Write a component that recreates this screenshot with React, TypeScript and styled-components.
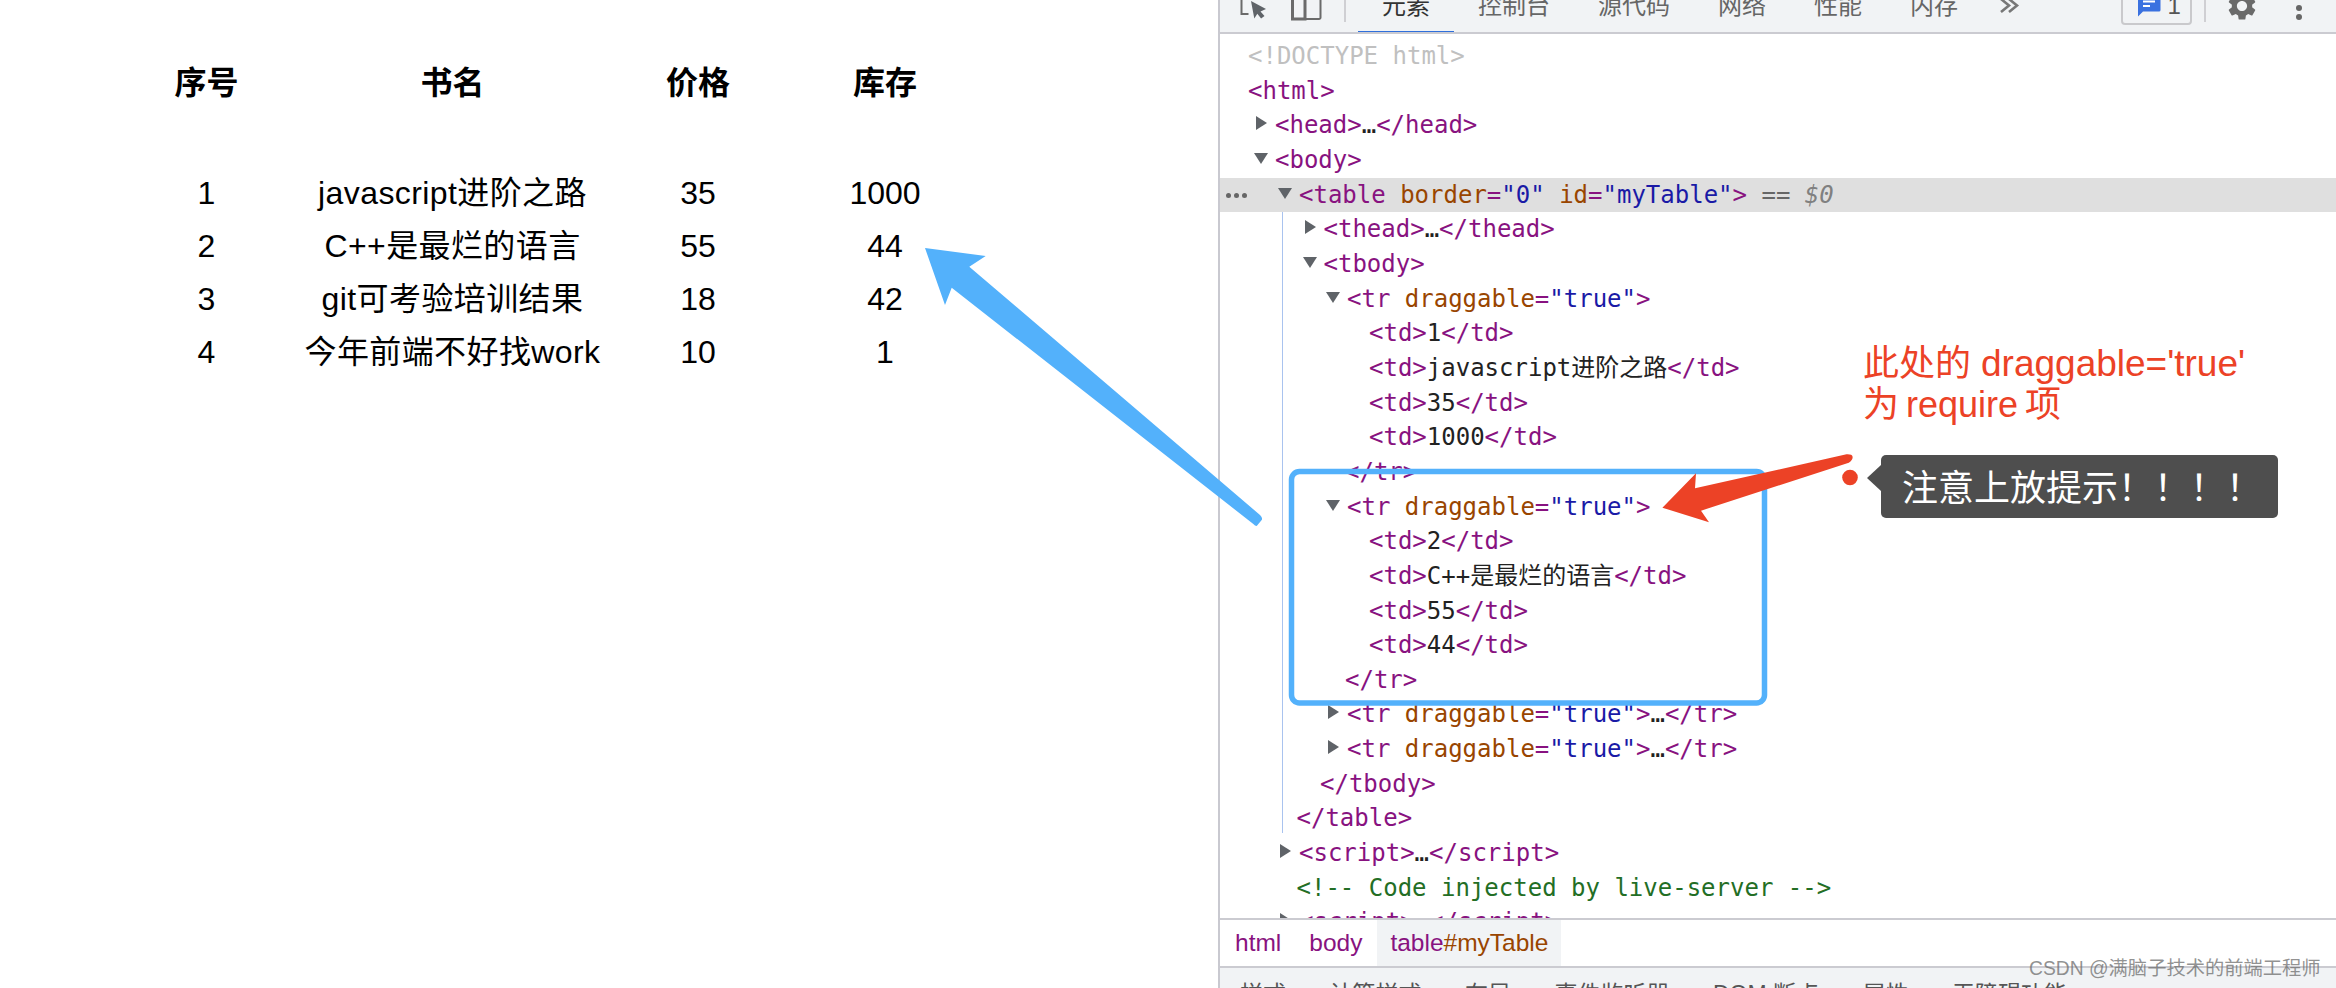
import React from "react";
import styled, { createGlobalStyle } from "styled-components";
import { MdSettings } from "react-icons/md";

const GlobalStyle = createGlobalStyle`
  html, body {
    margin: 0;
    padding: 0;
    background: #fff;
    overflow: hidden;
  }
  * {
    box-sizing: border-box;
  }
`;

const books = [
  { id: "1", name: "javascript进阶之路", price: "35", stock: "1000" },
  { id: "2", name: "C++是最烂的语言", price: "55", stock: "44" },
  { id: "3", name: "git可考验培训结果", price: "18", stock: "42" },
  { id: "4", name: "今年前端不好找work", price: "10", stock: "1" },
];

const TABS = ["元素", "控制台", "源代码", "网络", "性能", "内存"];
const LOWER_TABS = ["样式", "计算样式", "布局", "事件监听器", "DOM 断点", "属性", "无障碍功能"];

const DraggableTr = () => (
  <>
    <Tag>&lt;tr</Tag> <Attr>draggable</Attr>
    <Tag>=</Tag>
    <Val>"true"</Val>
    <Tag>&gt;</Tag>
  </>
);

const CollapsedTr = () => (
  <>
    <DraggableTr />
    <Ellipsis>…</Ellipsis>
    <Tag>&lt;/tr&gt;</Tag>
  </>
);

const Cell = ({ children }: { children: React.ReactNode }) => (
  <>
    <Tag>&lt;td&gt;</Tag>
    {children}
    <Tag>&lt;/td&gt;</Tag>
  </>
);

const App = () => {
  return (
    <Page>
      <GlobalStyle />
      <Preview>
        <TableRow $head>
          <span>序号</span>
          <span>书名</span>
          <span>价格</span>
          <span>库存</span>
        </TableRow>
        {books.map((b) => (
          <TableRow key={b.id}>
            <span>{b.id}</span>
            <BookName>{b.name}</BookName>
            <span>{b.price}</span>
            <span>{b.stock}</span>
          </TableRow>
        ))}
      </Preview>

      <DevTools>
        <Toolbar>
          <InspectIcon width="30" height="24" viewBox="0 0 30 24">
            <path d="M1.5 -4v21h7" fill="none" stroke="#6a6a6a" strokeWidth="2" />
            <path d="M11 4l15 8-5.5 2.6 4 4.4-3.4 2.4-3.8-4.6-3 4.6z" fill="#5f6368" />
          </InspectIcon>
          <DeviceIcon width="32" height="24" viewBox="0 0 32 24">
            <path d="M1.5 -4h12.5v25h-12.5z" fill="none" stroke="#6a6a6a" strokeWidth="3" />
            <path d="M14 -4h15.5v23.5a1.5 1.5 0 0 1-1.5 1.5H14" fill="none" stroke="#6a6a6a" strokeWidth="2" />
          </DeviceIcon>
          <ToolbarDivider $gap={21} />
          {TABS.map((t, i) => (
            <Tab key={t} $active={i === 0}>
              {t}
            </Tab>
          ))}
          <MoreTabs width="20" height="16" viewBox="0 0 20 16">
            <path d="M1 1l8 6.5-8 6.5M9 1l8 6.5-8 6.5" fill="none" stroke="#777" strokeWidth="2.6" />
          </MoreTabs>
          <Spacer />
          <IssueBadge>
            <svg width="24" height="18" viewBox="0 0 24 18">
              <path d="M3 -4h19a1.5 1.5 0 0 1 1.5 1.5V11a1.5 1.5 0 0 1-1.5 1.5H6L1 17.5V-2a1.5 1.5 0 0 1 2-2z" fill="#3a71e0" />
              <path d="M6 2.5h12M6 7h7" stroke="#fff" strokeWidth="2" />
            </svg>
            <span>1</span>
          </IssueBadge>
          <ToolbarDivider $gap={12.5} />
          <GearSlot>
            <MdSettings size={34} color="#6a6a6a" />
          </GearSlot>
          <Kebab>
            <i />
            <i />
          </Kebab>
        </Toolbar>

        <Tree>
          <GuideLine />
          <Row $x={1248} $tone="#c0c0c0">
            &lt;!DOCTYPE html&gt;
          </Row>
          <Row $x={1248}>
            <Tag>&lt;html&gt;</Tag>
          </Row>
          <Row $x={1275} $caret="closed">
            <Tag>&lt;head&gt;</Tag>
            <Ellipsis>…</Ellipsis>
            <Tag>&lt;/head&gt;</Tag>
          </Row>
          <Row $x={1275} $caret="open">
            <Tag>&lt;body&gt;</Tag>
          </Row>
          <Row $x={1299} $caret="open" $selected>
            <RowDots>
              <i />
              <i />
              <i />
            </RowDots>
            <Tag>&lt;table</Tag> <Attr>border</Attr>
            <Tag>=</Tag>
            <Val>"0"</Val> <Attr>id</Attr>
            <Tag>=</Tag>
            <Val>"myTable"</Val>
            <Tag>&gt;</Tag> <Gray>==</Gray> <Ref>$0</Ref>
          </Row>
          <Row $x={1323.5} $caret="closed">
            <Tag>&lt;thead&gt;</Tag>
            <Ellipsis>…</Ellipsis>
            <Tag>&lt;/thead&gt;</Tag>
          </Row>
          <Row $x={1323.5} $caret="open">
            <Tag>&lt;tbody&gt;</Tag>
          </Row>
          <Row $x={1347} $caret="open">
            <DraggableTr />
          </Row>
          <Row $x={1369}>
            <Cell>1</Cell>
          </Row>
          <Row $x={1369}>
            <Cell>javascript进阶之路</Cell>
          </Row>
          <Row $x={1369}>
            <Cell>35</Cell>
          </Row>
          <Row $x={1369}>
            <Cell>1000</Cell>
          </Row>
          <Row $x={1345}>
            <Tag>&lt;/tr&gt;</Tag>
          </Row>
          <Row $x={1347} $caret="open">
            <DraggableTr />
          </Row>
          <Row $x={1369}>
            <Cell>2</Cell>
          </Row>
          <Row $x={1369}>
            <Cell>C++是最烂的语言</Cell>
          </Row>
          <Row $x={1369}>
            <Cell>55</Cell>
          </Row>
          <Row $x={1369}>
            <Cell>44</Cell>
          </Row>
          <Row $x={1345}>
            <Tag>&lt;/tr&gt;</Tag>
          </Row>
          <Row $x={1347} $caret="closed">
            <CollapsedTr />
          </Row>
          <Row $x={1347} $caret="closed">
            <CollapsedTr />
          </Row>
          <Row $x={1320}>
            <Tag>&lt;/tbody&gt;</Tag>
          </Row>
          <Row $x={1296.5}>
            <Tag>&lt;/table&gt;</Tag>
          </Row>
          <Row $x={1299} $caret="closed">
            <Tag>&lt;script&gt;</Tag>
            <Ellipsis>…</Ellipsis>
            <Tag>&lt;/script&gt;</Tag>
          </Row>
          <Row $x={1296.5} $tone="#236e25">
            &lt;!-- Code injected by live-server --&gt;
          </Row>
          <Row $x={1299} $caret="closed">
            <Tag>&lt;script&gt;</Tag>
            <Ellipsis>…</Ellipsis>
            <Tag>&lt;/script&gt;</Tag>
          </Row>
        </Tree>

        <Breadcrumbs>
          <Crumb>
            <Tag>html</Tag>
          </Crumb>
          <Crumb>
            <Tag>body</Tag>
          </Crumb>
          <Crumb $current>
            <Tag>table</Tag>
            <Attr>#myTable</Attr>
          </Crumb>
        </Breadcrumbs>

        <LowerTabs>
          {LOWER_TABS.map((t) => (
            <LowerTab key={t}>{t}</LowerTab>
          ))}
        </LowerTabs>
      </DevTools>

      <Overlay width="2336" height="988" viewBox="0 0 2336 988">
        <path
          d="M925 248L985.7 256 969.3 266.7 1260 515Q1263 518 1261.7 520L1256.7 526Q1255 526 1253.3 524L951.7 287.7 945 305z"
          fill="#53b1fb"
        />
        <rect x="1291.5" y="471.5" width="473" height="231.5" rx="8" fill="none" stroke="#53b1fb" strokeWidth="5.5" />
        <path
          d="M1662.4 507.7L1696 473.3 1695 488.3 1846.5 454.3Q1852 454 1852.6 456.7 1853 460 1848.8 462.7L1701 510.7 1709 522.3z"
          fill="#ec4226"
        />
        <circle cx="1850" cy="477.5" r="7.8" fill="#ec4226" />
      </Overlay>

      <RedNote>
        <NoteLine>
          此处的 <NoteCode>draggable='true'</NoteCode>
        </NoteLine>
        <NoteLine $tight>为 require 项</NoteLine>
      </RedNote>

      <Hint>注意上放提示！！！！</Hint>

      <Watermark>CSDN @满脑子技术的前端工程师</Watermark>
    </Page>
  );
};

export default App;

const SANS = `"Liberation Sans", "Noto Sans CJK SC", sans-serif`;
const MONO = `"DejaVu Sans Mono", "Noto Sans CJK SC", monospace`;

const Page = styled.div`
  position: relative;
  display: flex;
  width: 2336px;
  height: 988px;
  overflow: hidden;
  font-family: ${SANS};
`;

const Preview = styled.div`
  width: 1218px;
  flex-shrink: 0;
  padding: 56px 0 0 151.5px;
`;

const TableRow = styled.div<{ $head?: boolean }>`
  display: grid;
  grid-template-columns: 110px 382px 109px 265px;
  height: 53px;
  margin-bottom: ${(p) => (p.$head ? "57px" : "0")};
  align-items: center;
  text-align: center;
  font-size: 32px;
  line-height: 44px;
  font-weight: ${(p) => (p.$head ? 700 : 400)};
  color: #000;
  white-space: nowrap;
`;

const BookName = styled.span`
  letter-spacing: 0.4px;
`;

const DevTools = styled.div`
  flex: 1;
  display: flex;
  flex-direction: column;
  border-left: 2px solid #c9c9d0;
  min-width: 0;
`;

const Toolbar = styled.div`
  display: flex;
  align-items: flex-end;
  height: 34px;
  flex-shrink: 0;
  background: #f1f3f5;
  border-bottom: 2px solid #cbcbd1;
  overflow: hidden;
`;

const InspectIcon = styled.svg`
  flex-shrink: 0;
  margin: 0 0 11px 20px;
`;

const DeviceIcon = styled.svg`
  flex-shrink: 0;
  margin: 0 0 10px 21px;
`;

const ToolbarDivider = styled.div<{ $gap: number }>`
  flex-shrink: 0;
  width: 2px;
  height: 22px;
  margin: 0 0 10px ${(p) => p.$gap}px;
  background: #cfcfd3;
`;

const Tab = styled.div<{ $active?: boolean }>`
  flex-shrink: 0;
  position: relative;
  top: 2px;
  height: 44px;
  padding: 0 24px;
  margin-left: ${(p) => (p.$active ? "12px" : "0")};
  font-size: 24px;
  line-height: 32px;
  color: ${(p) => (p.$active ? "#333" : "#666")};
  border-bottom: 3px solid ${(p) => (p.$active ? "#2f6fdb" : "transparent")};
`;

const MoreTabs = styled.svg`
  flex-shrink: 0;
  margin: 0 0 18px 18px;
`;

const Spacer = styled.div`
  flex: 1;
`;

const IssueBadge = styled.div`
  flex-shrink: 0;
  display: flex;
  align-items: flex-end;
  gap: 7px;
  width: 71px;
  height: 34px;
  margin-bottom: 7px;
  padding: 0 0 4px 14px;
  border: 2px solid #c9c9cc;
  border-radius: 4px;
  font-size: 24px;
  line-height: 26px;
  color: #555;

  svg {
    flex-shrink: 0;
    margin-bottom: 2px;
  }
`;

const GearSlot = styled.div`
  flex-shrink: 0;
  height: 34px;
  margin: 0 0 9px 19px;

  svg {
    display: block;
  }
`;

const Kebab = styled.div`
  flex-shrink: 0;
  display: flex;
  flex-direction: column;
  gap: 3.5px;
  margin: 0 34px 12px 37px;

  i {
    display: block;
    width: 6px;
    height: 6px;
    border-radius: 50%;
    background: #666;
  }
`;

const Tree = styled.div`
  position: relative;
  height: 886px;
  flex-shrink: 0;
  padding-top: 5px;
  overflow: hidden;
  border-bottom: 2px solid #cbcbd1;
`;

const GuideLine = styled.div`
  position: absolute;
  left: 62px;
  top: 177px;
  width: 1px;
  height: 622px;
  background: #a9c3ef;
`;

const Row = styled.div<{
  $x: number;
  $caret?: "open" | "closed";
  $selected?: boolean;
  $tone?: string;
}>`
  position: relative;
  height: 34.67px;
  line-height: 34.67px;
  padding-left: ${(p) => p.$x - 1220}px;
  font-family: ${MONO};
  font-size: 24px;
  white-space: pre;
  color: ${(p) => p.$tone || "#222"};
  background: ${(p) => (p.$selected ? "#dfdfdf" : "transparent")};

  &::before {
    content: "";
    display: ${(p) => (p.$caret ? "block" : "none")};
    position: absolute;
    left: ${(p) => p.$x - 1220 - (p.$caret === "open" ? 21 : 19)}px;
    top: ${(p) => (p.$caret === "open" ? 10 : 7.5)}px;
    width: 0;
    height: 0;
    border-style: solid;
    border-color: transparent;
    border-width: ${(p) => (p.$caret === "open" ? "11px 7.5px 0" : "7px 0 7px 11px")};
    ${(p) =>
      p.$caret === "open"
        ? "border-top-color: #5f6368;"
        : "border-left-color: #5f6368;"}
  }
`;

const RowDots = styled.span`
  position: absolute;
  left: 6px;
  top: 15px;
  display: flex;
  gap: 3px;

  i {
    display: block;
    width: 5px;
    height: 5px;
    border-radius: 50%;
    background: #666;
  }
`;

const Tag = styled.span`
  color: #881280;
`;

const Attr = styled.span`
  color: #994500;
`;

const Val = styled.span`
  color: #1a1aa6;
`;

const Ellipsis = styled.span`
  color: #222;
`;

const Gray = styled.span`
  color: #666;
`;

const Ref = styled.span`
  color: #808080;
  font-style: italic;
`;

const Breadcrumbs = styled.div`
  display: flex;
  height: 48px;
  flex-shrink: 0;
  padding-left: 2px;
  gap: 2px;
  border-bottom: 2px solid #cbcbd1;
`;

const Crumb = styled.div<{ $current?: boolean }>`
  display: flex;
  align-items: center;
  padding: 0 13px;
  font-size: 24.5px;
  background: ${(p) => (p.$current ? "#f1f3f5" : "transparent")};
`;

const LowerTabs = styled.div`
  flex: 1;
  display: flex;
  gap: 43.5px;
  padding: 10px 0 0 20px;
  background: #f1f3f5;
  font-size: 23px;
  line-height: 32px;
  color: #555;
  white-space: nowrap;
`;

const LowerTab = styled.div`
  flex-shrink: 0;
`;

const Overlay = styled.svg`
  position: absolute;
  left: 0;
  top: 0;
  pointer-events: none;
`;

const RedNote = styled.div`
  position: absolute;
  left: 1863px;
  top: 343px;
  font-size: 36px;
  line-height: 41px;
  color: #ec4226;
  white-space: nowrap;
`;

const NoteLine = styled.div<{ $tight?: boolean }>`
  word-spacing: ${(p) => (p.$tight ? "-3px" : "0")};
`;

const NoteCode = styled.span`
  font-size: 37px;
`;

const Hint = styled.div`
  position: absolute;
  left: 1881px;
  top: 455px;
  width: 397px;
  height: 63px;
  padding-left: 21px;
  font-size: 36px;
  line-height: 68px;
  color: #fff;
  white-space: nowrap;
  background: #4e4e4e;
  border-radius: 5px;

  &::before {
    content: "";
    position: absolute;
    left: -14px;
    top: 10px;
    border-style: solid;
    border-width: 13px 14px 13px 0;
    border-color: transparent #4e4e4e transparent transparent;
  }
`;

const Watermark = styled.div`
  position: absolute;
  left: 2029px;
  top: 957px;
  font-size: 19.3px;
  line-height: 24px;
  color: rgba(110, 110, 110, 0.75);
  white-space: nowrap;
`;
